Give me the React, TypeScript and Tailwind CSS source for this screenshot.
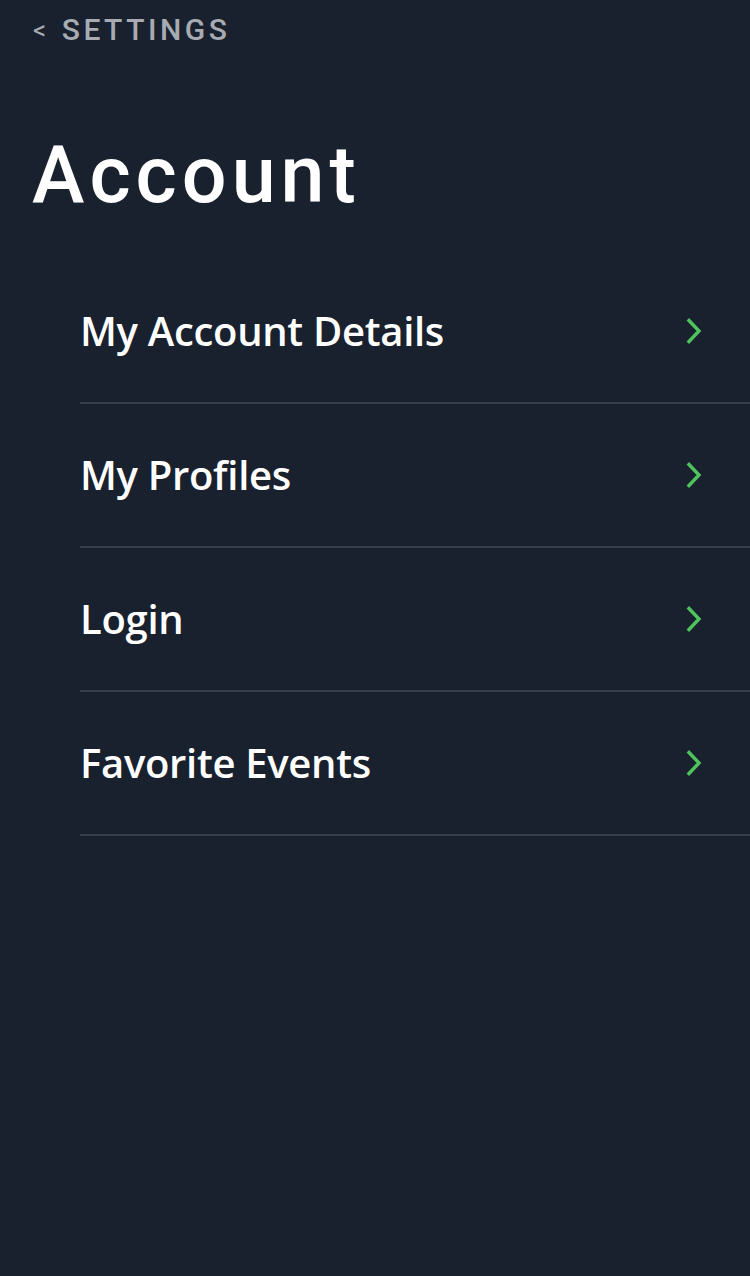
import React from "react";

const items = ["My Account Details", "My Profiles", "Login", "Favorite Events"];

function Chevron() {
  return (
    <svg width="18" height="26" viewBox="0 0 18 26" fill="none">
      <path d="M3 2.5 L13 13 L3 23.5" stroke="#4fc35c" strokeWidth="3.4" strokeLinecap="square" strokeLinejoin="miter" />
    </svg>
  );
}

export default function App() {
  return (
    <div className="w-[750px] h-[1276px] bg-[#19212f] overflow-hidden">
      <div className="pl-[33px] pt-[12px] flex items-center gap-[12px] text-[#a8acb2] font-['Roboto',sans-serif] font-medium tracking-[3.5px] text-[30px] leading-[36px]">
        <span className="text-[26px] font-normal">&lt;</span>
        <span>SETTINGS</span>
      </div>
      <h1 className="pl-[32px] mt-[82px] text-white font-['Roboto',sans-serif] font-medium text-[79px] leading-[90px] tracking-[5px]">
        Account
      </h1>
      <div className="mt-[40px] pl-[80px]">
        {items.map((t) => (
          <div key={t} className="h-[144px] border-b-2 border-[#363f4c] flex items-center justify-between pr-[46px]">
            <span className="text-white font-['Open_Sans',sans-serif] font-semibold text-[40px] tracking-[-0.3px]">{t}</span>
            <Chevron />
          </div>
        ))}
      </div>
    </div>
  );
}
